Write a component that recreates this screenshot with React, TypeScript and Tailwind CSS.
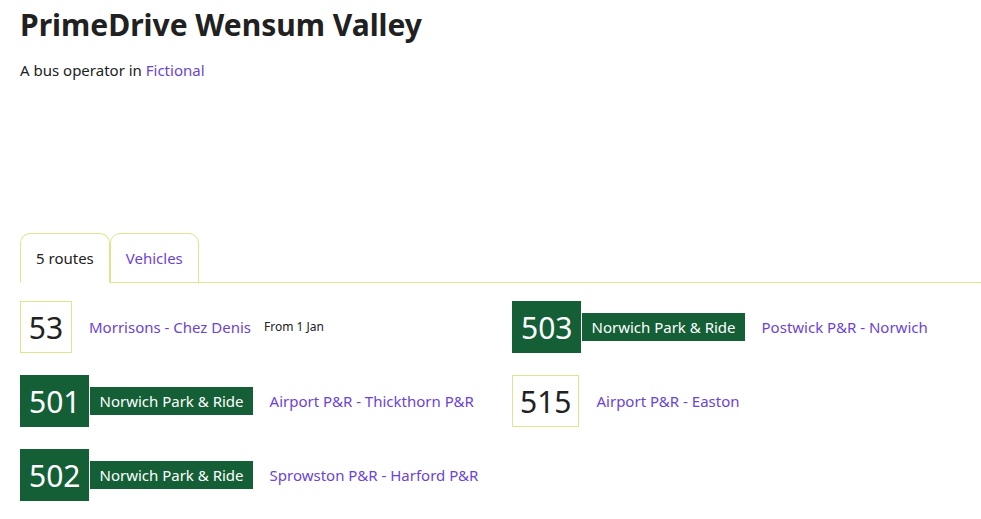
const routes = [
  { num: "53", name: "Morrisons - Chez Denis", note: "From 1 Jan" },
  { num: "503", brand: "Norwich Park & Ride", name: "Postwick P&R - Norwich" },
  { num: "501", brand: "Norwich Park & Ride", name: "Airport P&R - Thickthorn P&R" },
  { num: "515", name: "Airport P&R - Easton" },
  { num: "502", brand: "Norwich Park & Ride", name: "Sprowston P&R - Harford P&R" },
];

export default function App() {
  return (
    <main className="min-h-[519px] bg-white pl-5 text-[#212121] font-['Noto_Sans',sans-serif]">
      <h1 className="pt-[3px] text-[30px] font-bold leading-[44px]">PrimeDrive Wensum Valley</h1>
      <p className="mt-[13px] text-[15px] leading-5">
        A bus operator in <a className="text-[#6b44d6]">Fictional</a>
      </p>

      <div className="mt-[153px] flex border-b border-[#dde68c]">
        <div className="-mb-px rounded-t-[10px] border border-b-white border-[#dde68c] bg-white px-[15px] py-[13px] text-[15px] leading-[22px]">
          5 routes
        </div>
        <div className="-mb-px rounded-t-[10px] border border-[#dde68c] px-[15px] py-[13px] text-[15px] leading-[22px] text-[#6b44d6]">
          Vehicles
        </div>
      </div>

      <ul className="mt-[18px] grid grid-cols-[492px_1fr] gap-y-[22px]">
        {routes.map((r) => (
          <li key={r.num} className="flex h-[52px] items-center">
            {r.brand ? (
              <>
                <span className="flex h-[52px] min-w-[52px] items-center justify-center bg-[#145f36] px-[9px] text-[30px] text-white">
                  {r.num}
                </span>
                <span className="ml-px flex h-7 items-center bg-[#145f36] px-[9px] text-[15px] text-white">
                  {r.brand}
                </span>
              </>
            ) : (
              <span className="flex h-[52px] min-w-[52px] items-center justify-center border border-[#dde68c] px-[7px] text-[30px]">
                {r.num}
              </span>
            )}
            <a className="ml-[17px] text-[15px] text-[#6b44d6]">{r.name}</a>
            {r.note && <span className="ml-[13px] text-[12px]">{r.note}</span>}
          </li>
        ))}
      </ul>
    </main>
  );
}
